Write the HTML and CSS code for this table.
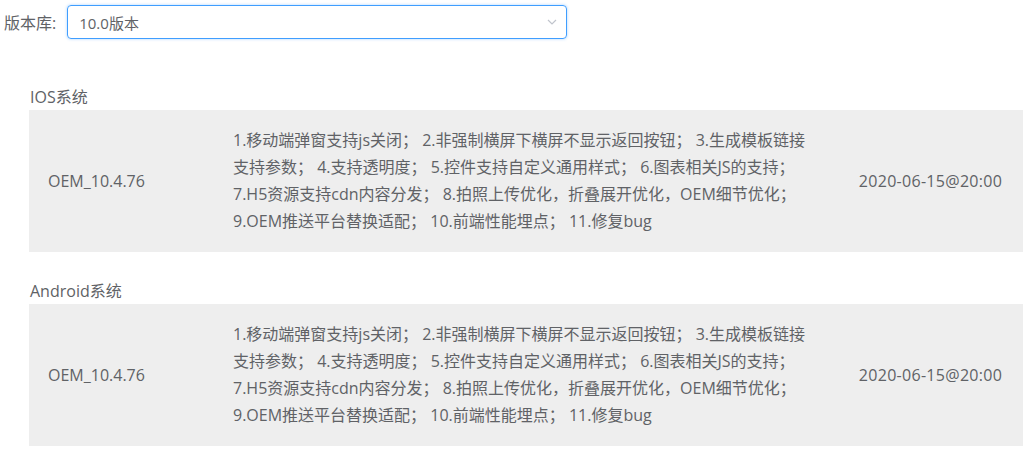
FILE: index.html
```html
<!DOCTYPE html>
<html lang="zh-CN">
<head>
<meta charset="utf-8">
<title>版本库</title>
<link rel="stylesheet" href="styles.css">
</head>
<body>
<div class="toolbar">
  <span class="label">版本库:</span>
  <div class="select">
    <span class="select-value">10.0版本</span>
    <svg class="chevron" width="10" height="6" viewBox="0 0 10 6"><path d="M1 1 L5 5 L9 1" fill="none" stroke="#c0c4cc" stroke-width="1.2"/></svg>
  </div>
</div>

<section class="platform">
  <h2 class="platform-title">IOS系统</h2>
  <div class="release">
    <div class="ver">OEM_10.4.76</div>
    <div class="desc">1.移动端弹窗支持js关闭； 2.非强制横屏下横屏不显示返回按钮； 3.生成模板链接支持参数； 4.支持透明度； 5.控件支持自定义通用样式； 6.图表相关JS的支持； 7.H5资源支持cdn内容分发； 8.拍照上传优化，折叠展开优化，OEM细节优化； 9.OEM推送平台替换适配； 10.前端性能埋点； 11.修复bug</div>
    <div class="date">2020-06-15@20:00</div>
  </div>
</section>

<section class="platform">
  <h2 class="platform-title">Android系统</h2>
  <div class="release">
    <div class="ver">OEM_10.4.76</div>
    <div class="desc">1.移动端弹窗支持js关闭； 2.非强制横屏下横屏不显示返回按钮； 3.生成模板链接支持参数； 4.支持透明度； 5.控件支持自定义通用样式； 6.图表相关JS的支持； 7.H5资源支持cdn内容分发； 8.拍照上传优化，折叠展开优化，OEM细节优化； 9.OEM推送平台替换适配； 10.前端性能埋点； 11.修复bug</div>
    <div class="date">2020-06-15@20:00</div>
  </div>
</section>
</body>
</html>
```
FILE: styles.css
```css
* { box-sizing: border-box; }
html, body { margin: 0; padding: 0; background: #fff; }
body {
  font-family: "Open Sans", "Noto Sans CJK SC", sans-serif;
  font-size: 16px;
  color: #606266;
}
.toolbar {
  display: flex;
  align-items: center;
  padding: 5px 0 0 4px;
  gap: 11px;
}
.label { font-size: 16px; white-space: nowrap; }
.select {
  width: 500px;
  height: 34px;
  border: 1px solid #409eff;
  border-radius: 4px;
  box-shadow: 0 0 3px rgba(64, 158, 255, 0.45);
  display: flex;
  align-items: center;
  justify-content: space-between;
  padding: 0 9px 0 11px;
}
.select-value { font-size: 15px; color: #606266; }
.chevron { display: block; }

.platform { padding: 0 4px 0 29px; }
.platform:first-of-type { margin-top: 46px; }
.platform + .platform { margin-top: 27px; }
.platform-title {
  margin: 0;
  font-weight: normal;
  font-size: 16px;
  line-height: 25px;
  padding-left: 1px;
  color: #606266;
}
.release {
  background: #eeeeee;
  display: flex;
  align-items: center;
  padding: 17px 0;
}
.ver { width: 204px; padding-left: 19px; }
.desc { width: 585px; line-height: 27px; }
.date { flex: 1; text-align: center; padding-left: 20px; letter-spacing: 0.3px; }
```
